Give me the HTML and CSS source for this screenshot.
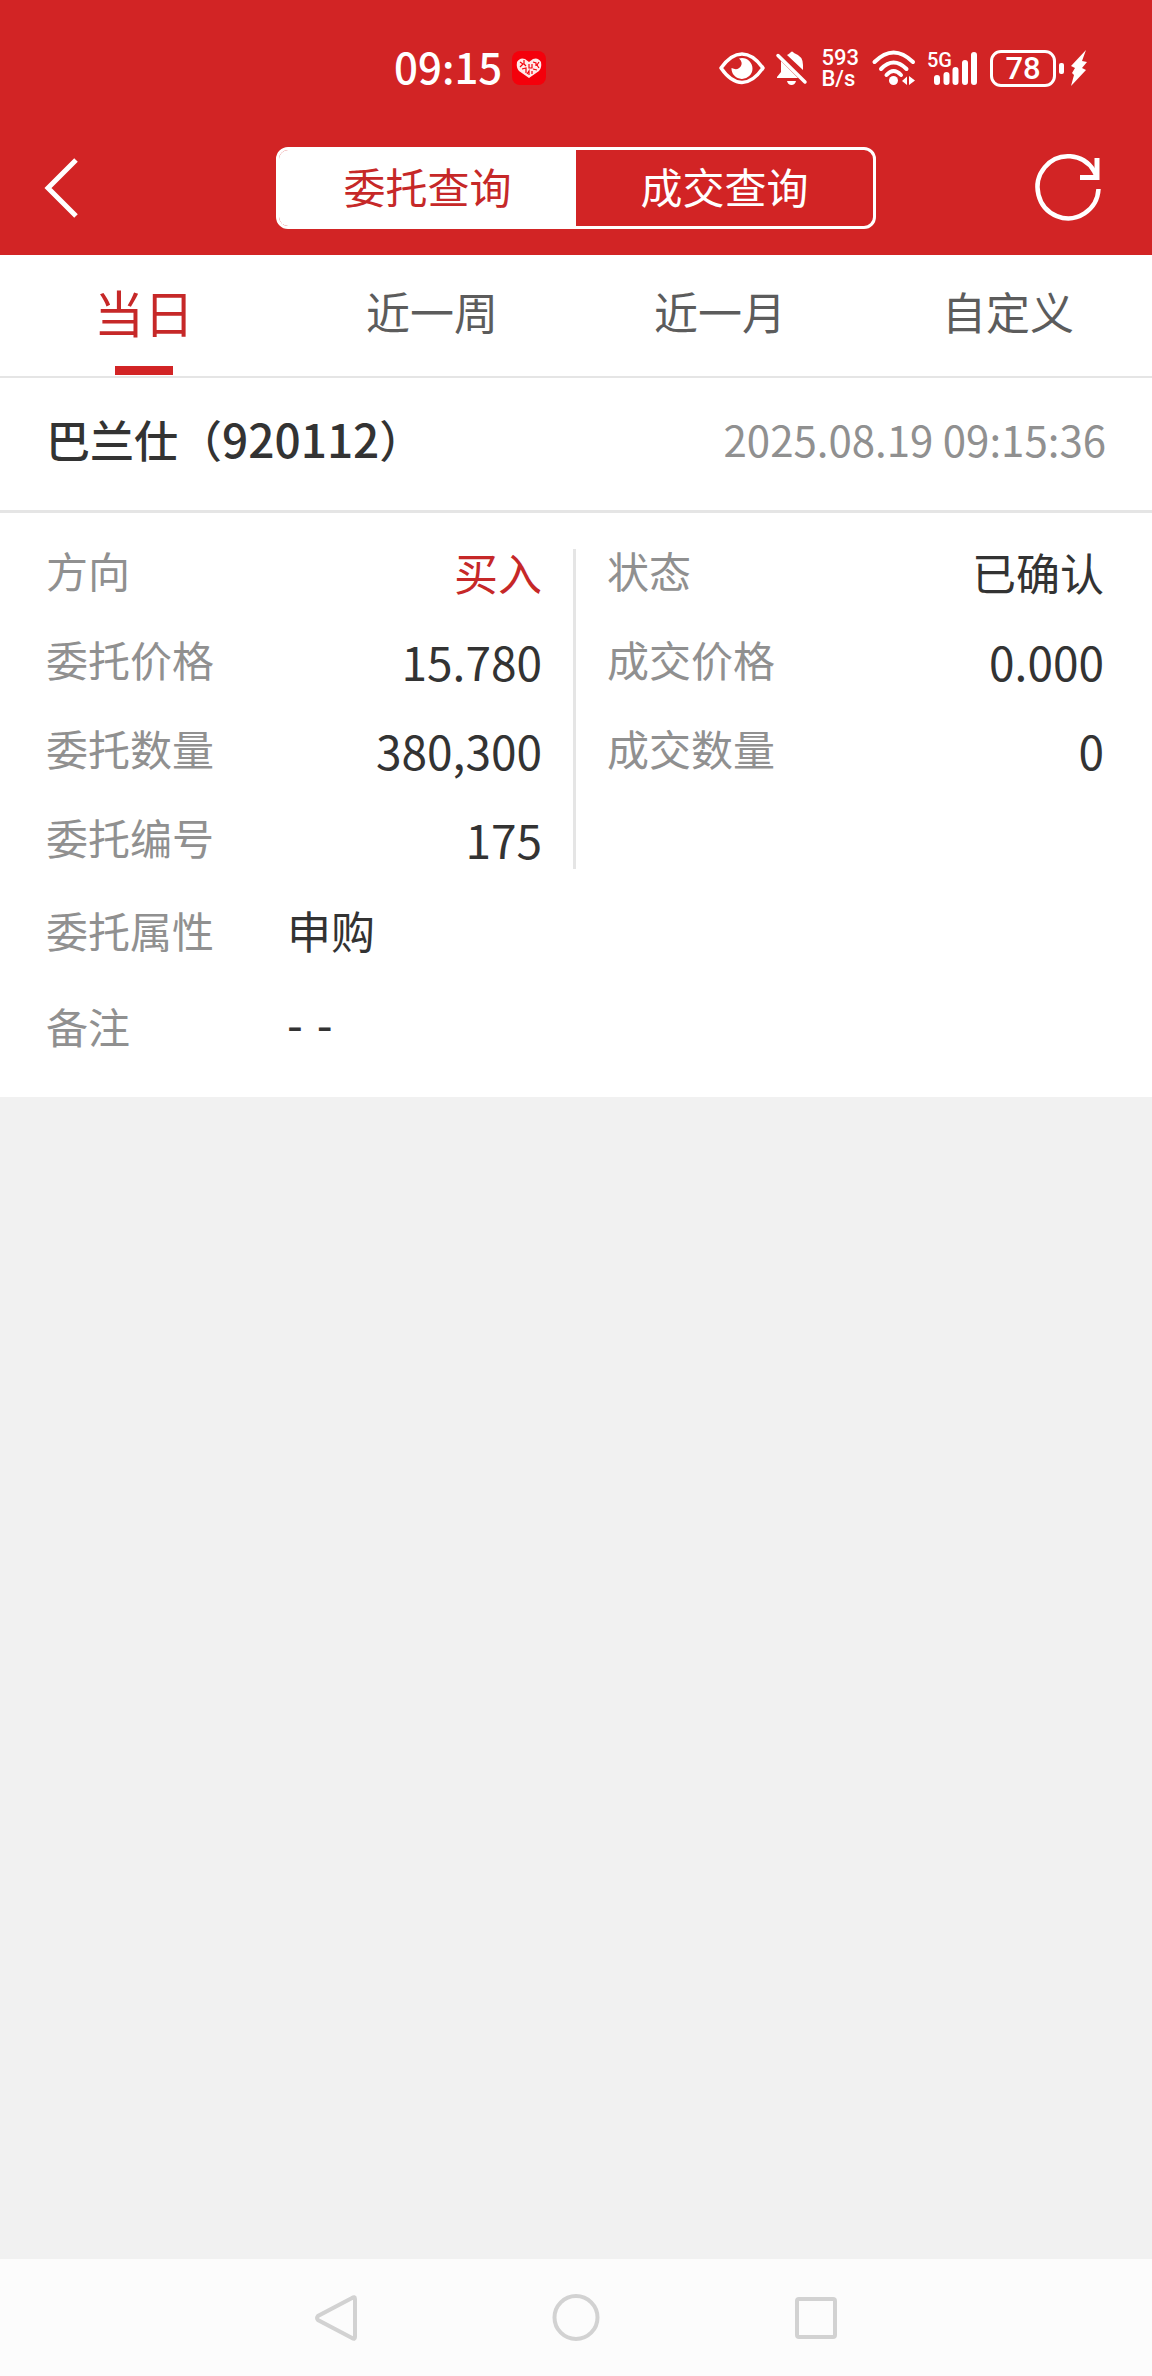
FILE: index.html
```html
<!DOCTYPE html>
<html lang="zh-CN">
<head>
    <meta charset="UTF-8">
    <meta name="viewport" content="width=device-width, initial-scale=1.0">
    <title>委托查询</title>
    <link rel="stylesheet" href="styles.css">
</head>
<body>
    <header class="header">
        <div class="status-bar">
            <div class="status-left">
                <span class="clock">09:15</span>
                <svg class="app-icon" width="34" height="34" viewBox="0 0 34 34">
                    <rect width="34" height="34" rx="8" fill="#f4000b"/>
                    <path d="M17 27 L7 20 Q4 17 5 11 Q8 6 13 8 L17 11 L21 8 Q26 6 29 11 Q30 17 27 20 Z" fill="#ffe9e9"/>
                    <path d="M8 11l3 2-3 3M12 9v4l2 2M10 18l4-1v5M17 13v4h3v-4M21 11l3 1v3M27 11l-2 3 2 3M21 18l4 1M15 23l2-3v4M20 20v3" fill="none" stroke="#f4000b" stroke-width="1.2"/>
                </svg>
            </div>
            <div class="status-right">
                <svg width="46" height="36" viewBox="0 0 46 36">
                    <path d="M2 18 Q12 4 23 4 Q34 4 44 18 Q34 32.500 23 32.500 Q12 32.500 2 18 Z" fill="none" stroke="#fff" stroke-width="3.500" stroke-linejoin="round"/>
                    <path d="M23 8 A10.500 10.500 0 1 1 12.500 18 Q19 21 22 16 Q24 12 20 8.500 Z" fill="#fff"/>
                </svg>
                <svg class="bell" width="32" height="36" viewBox="0 0 32 36">
                    <path d="M5 11 L22 28 H1 V27 L5 22 Z M11 5 Q13 4 14 3 Q16 0 18 3 Q27 6 27 15 V20 Z M11 31 H20 Q19 35 15.500 35 Q12 35 11 31 Z" fill="#fff"/>
                    <path d="M2 5.500 L29 32" stroke="#fff" stroke-width="3.500" stroke-linecap="round"/>
                </svg>
                <span class="net-speed">593<br>B/s</span>
                <svg class="wifi" width="44" height="36" viewBox="0 0 44 36">
                    <g fill="none" stroke="#fff" stroke-width="4" stroke-linecap="round">
                        <path d="M2.500 12 Q21.500 -7 41 12"/>
                        <path d="M9 19 Q21.500 6 34.500 19"/>
                        <path d="M14.500 25 Q21.500 17 29 25"/>
                    </g>
                    <circle cx="21.500" cy="30.500" r="4.500" fill="#fff"/>
                    <path d="M30 31 L35 26.500 V35 Z M43 30.500 L37 26 V35 Z" fill="#fff"/>
                </svg>
                <div class="signal">
                    <span class="signal-type">5G</span>
                    <svg width="44" height="36" viewBox="0 0 44 36">
                        <path d="M3 28V32M12.500 25V32M21.500 20V32M31 13V32M40 5V32" stroke="#fff" stroke-width="6" stroke-linecap="round"/>
                    </svg>
                </div>
                <div class="battery"><span class="battery-level">78</span></div>
                <svg class="bolt" width="18" height="38" viewBox="0 0 18 38">
                    <path d="M16 1 L1 17 L5 19 L2 24 L4 26 L1 37 L16 21 L12 19 L17 13 L12 12 Z" fill="#fff"/>
                </svg>
            </div>
        </div>
        <nav class="title-bar">
            <button class="icon-btn" aria-label="返回">
                <svg width="34" height="60" viewBox="0 0 34 60">
                    <path d="M30 2 L2 30 L30 58" fill="none" stroke="#fff" stroke-width="5"/>
                </svg>
            </button>
            <div class="segment">
                <button class="segment-btn active">委托查询</button>
                <button class="segment-btn">成交查询</button>
            </div>
            <button class="icon-btn" aria-label="刷新">
                <svg width="68" height="68" viewBox="0 0 68 68">
                    <path d="M60.500 35 A30.500 31 0 1 1 56 17 L59 23" fill="none" stroke="#fff" stroke-width="4.500"/>
                    <path d="M42 23.500 H59 V4" fill="none" stroke="#fff" stroke-width="5"/>
                </svg>
            </button>
        </nav>
    </header>

    <div class="tabs">
        <button class="tab active">当日</button>
        <button class="tab">近一周</button>
        <button class="tab">近一月</button>
        <button class="tab">自定义</button>
    </div>

    <main class="order">
        <div class="order-head">
            <h1 class="stock">巴兰仕（<span class="num">920112</span>）</h1>
            <time class="order-time">2025.08.19 09:15:36</time>
        </div>
        <div class="order-grid">
            <dl class="order-col">
                <div class="row"><dt>方向</dt><dd class="buy">买入</dd></div>
                <div class="row"><dt>委托价格</dt><dd class="num">15.780</dd></div>
                <div class="row"><dt>委托数量</dt><dd class="num">380,300</dd></div>
                <div class="row"><dt>委托编号</dt><dd class="num">175</dd></div>
            </dl>
            <dl class="order-col">
                <div class="row"><dt>状态</dt><dd>已确认</dd></div>
                <div class="row"><dt>成交价格</dt><dd class="num">0.000</dd></div>
                <div class="row"><dt>成交数量</dt><dd class="num">0</dd></div>
            </dl>
        </div>
        <dl class="order-extra">
            <div class="extra-row"><dt>委托属性</dt><dd>申购</dd></div>
            <div class="extra-row"><dt>备注</dt><dd class="empty">- -</dd></div>
        </dl>
    </main>

    <footer class="nav-bar">
        <button class="icon-btn" aria-label="后退">
            <svg width="48" height="48" viewBox="0 0 48 48">
                <path d="M40 4 Q43 2 43 5 V43 Q43 46 40 44 L6 26 Q4 24 6 22 Z" fill="none" stroke="#d2d2d2" stroke-width="4"/>
            </svg>
        </button>
        <button class="icon-btn" aria-label="主页">
            <svg width="48" height="48" viewBox="0 0 48 48">
                <circle cx="24" cy="23.500" r="21.500" fill="none" stroke="#d2d2d2" stroke-width="4"/>
            </svg>
        </button>
        <button class="icon-btn" aria-label="最近任务">
            <svg width="48" height="48" viewBox="0 0 48 48">
                <rect x="5" y="5" width="38" height="38" rx="2" fill="none" stroke="#d2d2d2" stroke-width="4"/>
            </svg>
        </button>
    </footer>
</body>
</html>
```

FILE: styles.css
```css
* {
    box-sizing: border-box;
}
body {
    margin: 0;
    min-height: 100vh;
    display: flex;
    flex-direction: column;
    background: #f1f1f1;
    color: #333;
    font-family: "Noto Sans CJK SC", sans-serif;
    font-size: 44px;
}
button {
    padding: 0;
    border: none;
    background: none;
    color: inherit;
    font: inherit;
    cursor: pointer;
}
svg {
    display: block;
    overflow: visible;
}
h1, dl, dd {
    margin: 0;
}

/* Header */
.header {
    background: #d22425;
    color: #fff;
}
.status-bar {
    height: 120px;
    padding: 16px 64px 0 394px;
    display: flex;
    align-items: center;
    justify-content: space-between;
}
.status-left,
.status-right {
    display: flex;
    align-items: center;
}
.clock {
    font-size: 42px;
    font-weight: 500;
    line-height: 48px;
    padding-bottom: 4px;
}
.app-icon {
    margin-left: 10px;
}
.bell {
    margin-left: 11px;
}
.net-speed {
    margin-left: 13px;
    font: 500 22px/21px Roboto, sans-serif;
}
.wifi {
    margin-left: 13px;
}
.signal {
    position: relative;
    margin-left: 18px;
}
.signal-type {
    position: absolute;
    left: -7px;
    top: 0;
    font: 500 20px/20px Roboto, sans-serif;
}
.battery {
    position: relative;
    width: 66px;
    height: 37px;
    margin-left: 12px;
    border: 3px solid #fff;
    border-radius: 11px;
    text-align: center;
}
.battery::after {
    content: "";
    position: absolute;
    right: -11px;
    top: 10px;
    width: 5px;
    height: 11px;
    border-radius: 2px;
    background: #fff;
}
.battery-level {
    display: block;
    font: 500 31px/31px Roboto, sans-serif;
}
.bolt {
    margin-left: 14px;
}
.title-bar {
    height: 135px;
    padding: 0 46px;
    display: flex;
    align-items: center;
    justify-content: space-between;
}
.title-bar .icon-btn {
    width: 68px;
}
.segment {
    flex: 0 1 600px;
    height: 82px;
    display: flex;
    border: 3px solid #fff;
    border-radius: 12px;
    overflow: hidden;
    font-size: 42px;
}
.segment-btn {
    flex: 1;
    line-height: 72px;
    padding-bottom: 4px;
}
.segment-btn.active {
    background: #fff;
    color: #c62828;
}

/* Tabs */
.tabs {
    display: flex;
    height: 123px;
    background: #fff;
    border-bottom: 2px solid #e5e5e5;
    color: #5c5c5c;
}
.tab {
    position: relative;
    flex: 1;
    padding-bottom: 10px;
}
.tab.active {
    color: #c62828;
    font-size: 50px;
}
.tab.active::after {
    content: "";
    position: absolute;
    left: 50%;
    bottom: 1px;
    width: 58px;
    height: 9px;
    margin-left: -29px;
    background: #d22425;
}

/* Order */
.order {
    background: #fff;
    padding-bottom: 21px;
}
.num {
    font-size: 46px;
}
.order-head {
    height: 135px;
    padding: 0 46px 12px;
    display: flex;
    align-items: center;
    justify-content: space-between;
    border-bottom: 3px solid #e5e5e5;
}
.stock {
    font-size: 44px;
    font-weight: 500;
}
.order-time {
    color: #909090;
    font-size: 42px;
}
.order-grid {
    display: grid;
    grid-template-columns: 1fr 1fr;
    padding-top: 36px;
}
.order-col {
    display: flex;
    flex-direction: column;
    gap: 37px;
    padding: 0 48px 1px 31px;
}
.order-col:first-child {
    padding: 0 31px 1px 46px;
    border-right: 3px solid #e5e5e5;
}
.row {
    display: flex;
    align-items: flex-start;
    justify-content: space-between;
    height: 52px;
}
dt {
    color: #909090;
    font-size: 42px;
    line-height: 42px;
}
dd {
    line-height: 46px;
}
.buy {
    color: #c62828;
}
.order-extra {
    margin-top: 15px;
}
.extra-row {
    display: flex;
    align-items: center;
    height: 96px;
    padding: 0 46px 4px;
}
.extra-row dt {
    width: 241px;
}
.empty {
    font-family: "DejaVu Sans", sans-serif;
}

/* System navigation */
.nav-bar {
    margin-top: auto;
    height: 117px;
    display: flex;
    align-items: center;
    justify-content: center;
    gap: 192px;
    background: #fcfcfc;
}
```
